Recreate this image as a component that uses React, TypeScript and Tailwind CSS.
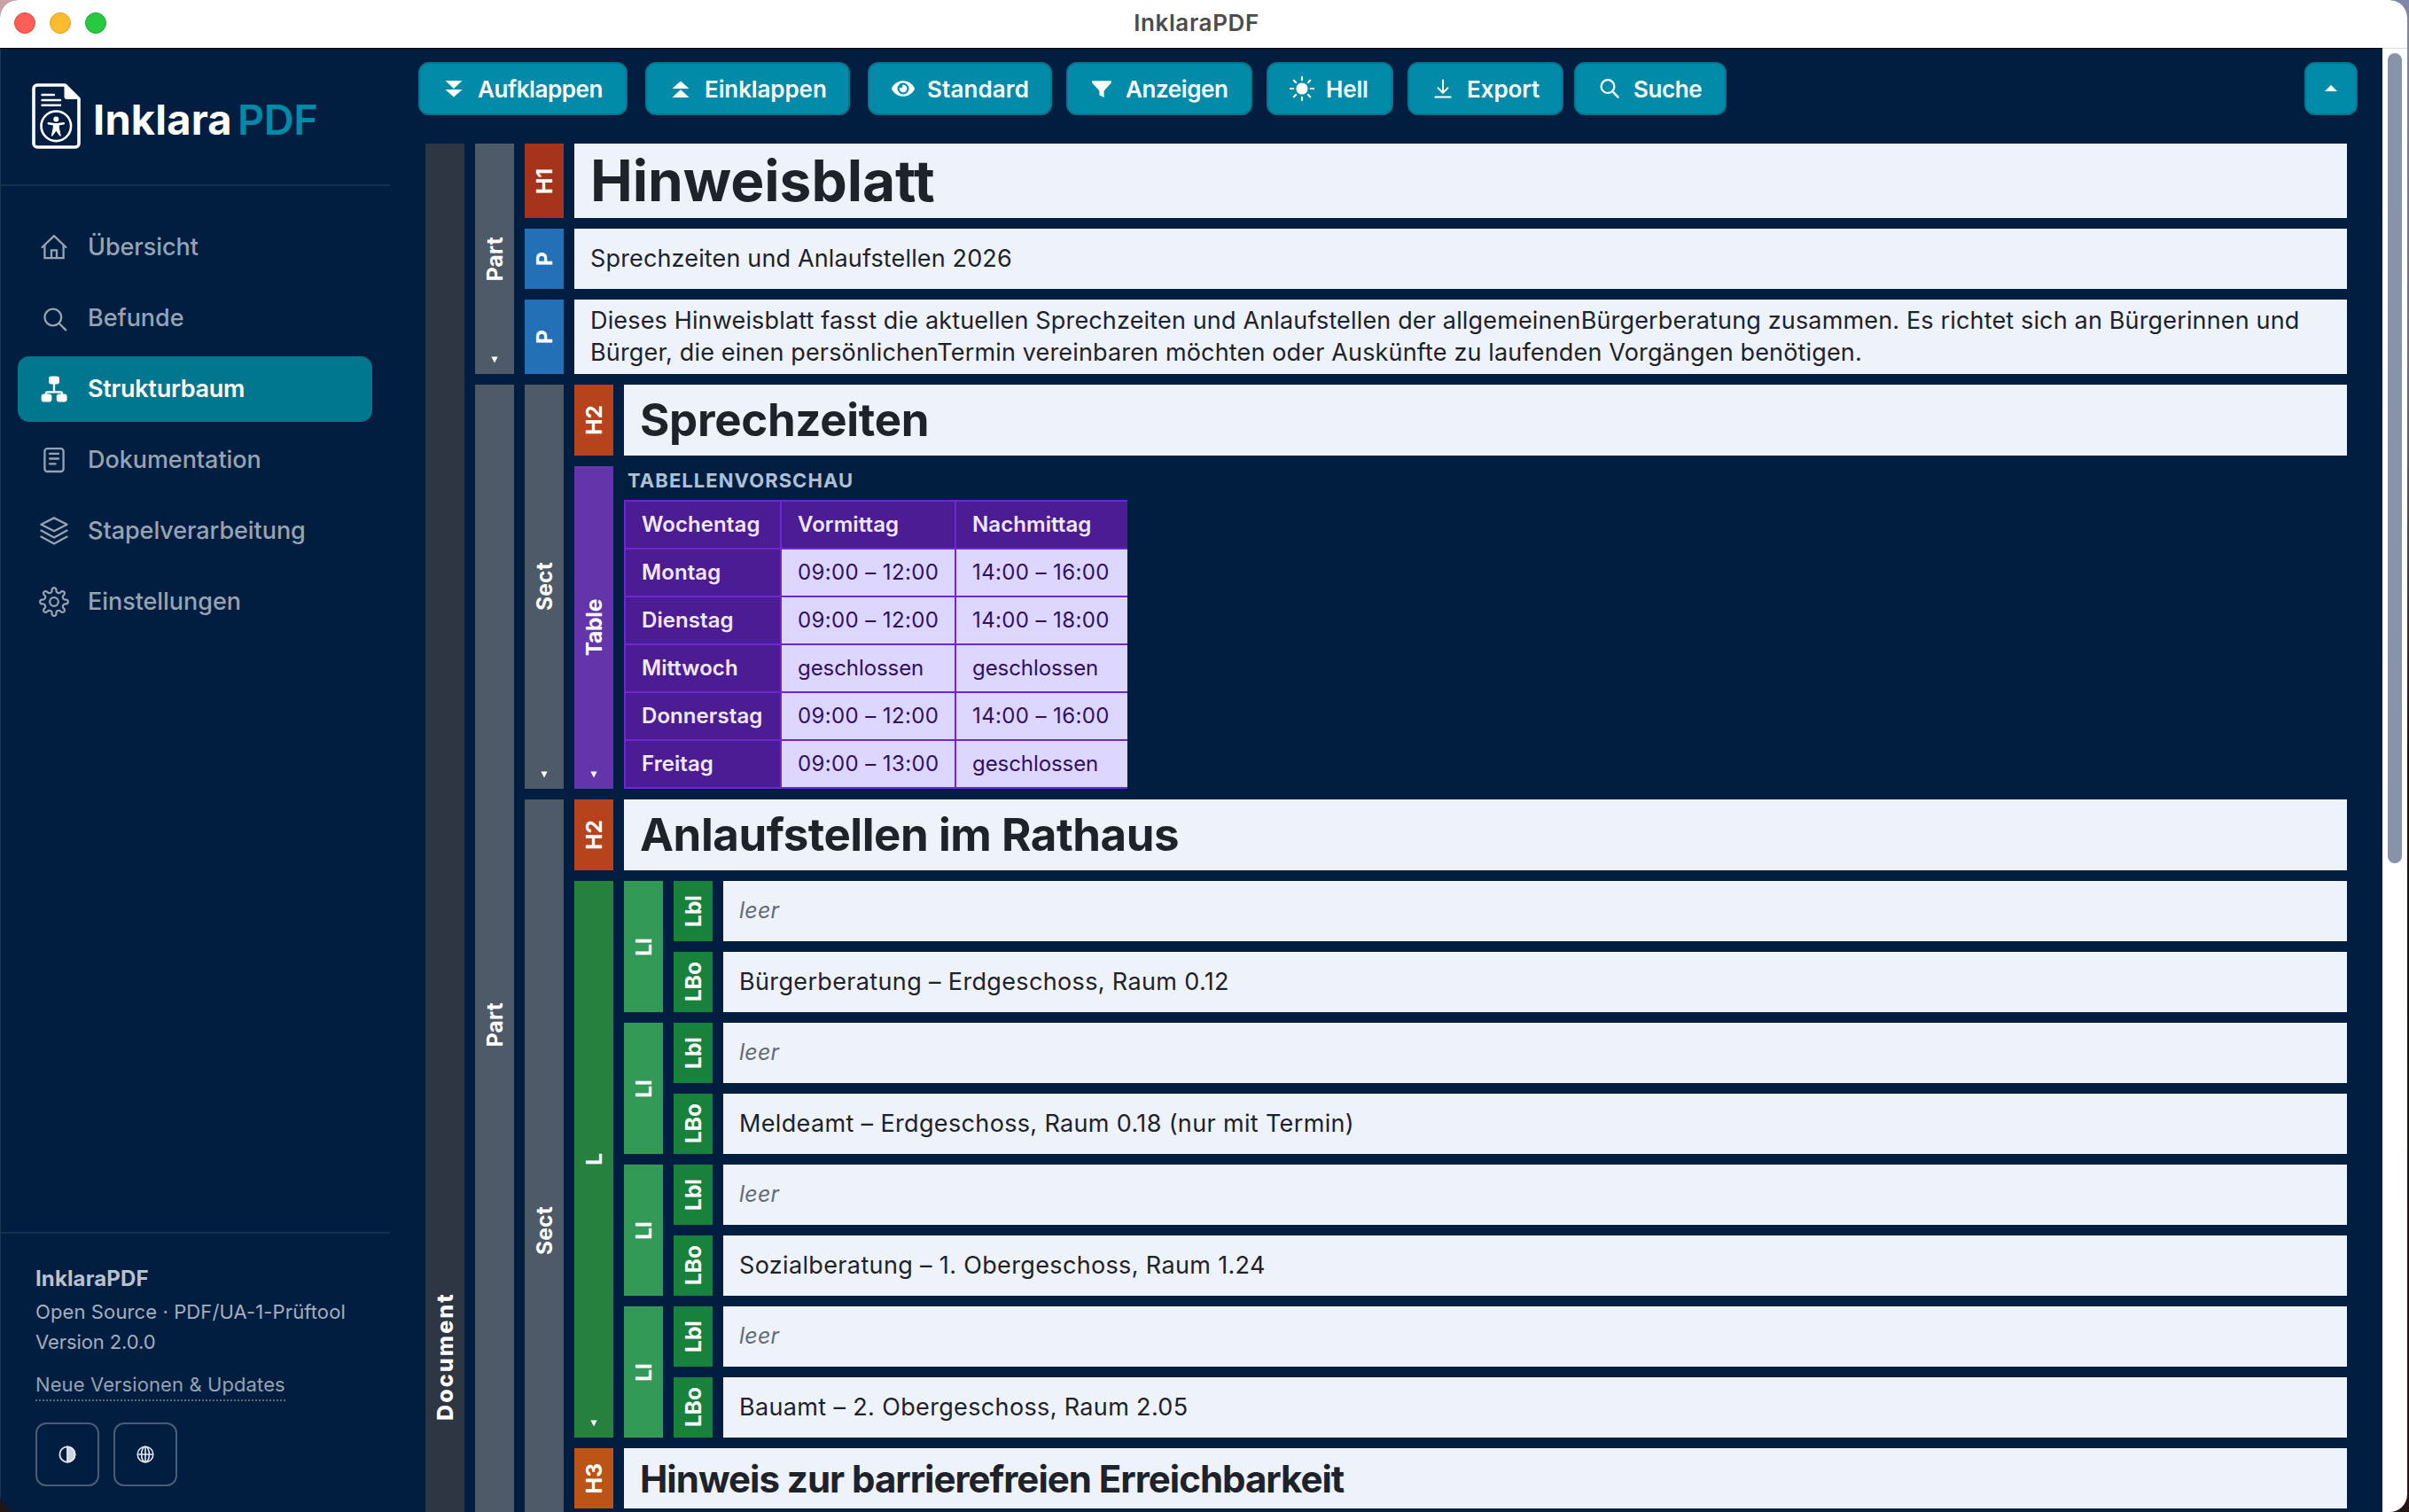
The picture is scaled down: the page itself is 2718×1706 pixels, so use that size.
import type { ReactNode } from "react";
import { FaEye } from "react-icons/fa";

const polar = (deg: number, r: number) => {
  const a = (deg * Math.PI) / 180;
  return `${(17 + r * Math.cos(a)).toFixed(2)} ${(17 + r * Math.sin(a)).toFixed(2)}`;
};

const GEAR_PATH =
  `M${polar(-10.5, 12.8)}` +
  Array.from({ length: 8 }, (_, k) => {
    const t = k * 45;
    return `A2.5 2.5 0 0 1 ${polar(t, 15.9)}A2.5 2.5 0 0 1 ${polar(t + 10.5, 12.8)}A3 3 0 0 0 ${polar(t + 34.5, 12.8)}`;
  }).join("") +
  "Z";

function NavSvg({ children }: { children: ReactNode }) {
  return (
    <svg
      viewBox="0 0 32 32"
      className="h-8 w-8 shrink-0 overflow-visible"
      fill="none"
      stroke="currentColor"
      strokeWidth={2.3}
      strokeLinecap="round"
      strokeLinejoin="round"
    >
      {children}
    </svg>
  );
}

const HomeIcon = (
  <NavSvg>
    <path d="M2.6 16 16 3.2 29.4 16" />
    <path d="M5.4 13.5V28.2H26.6V13.5" strokeLinejoin="miter" />
    <path d="M13 28V19.3H19V28" strokeLinejoin="miter" strokeLinecap="butt" />
  </NavSvg>
);
const SearchIcon = (
  <NavSvg>
    <circle cx="14.8" cy="15" r="9.4" />
    <path d="M21.6 21.8 29.2 29.4" />
  </NavSvg>
);
const TreeIcon = (
  <NavSvg>
    <g fill="currentColor" stroke="none">
      <rect x="10" y="1.4" width="12" height="9" rx="3" />
      <rect x="1.6" y="21.4" width="11.8" height="9" rx="3" />
      <rect x="18.8" y="21.4" width="11.8" height="9" rx="3" />
    </g>
    <path d="M16 10V19M7 22V20.5Q7 19.3 8.2 19.3H23.8Q25 19.3 25 20.5V22" />
  </NavSvg>
);
const DocIcon = (
  <NavSvg>
    <rect x="5.4" y="3.2" width="21.2" height="25.8" rx="3" />
    <path d="M11 8.9H21M11 14.5H21M11 20.3H17.6" />
  </NavSvg>
);
const StackIcon = (
  <NavSvg>
    <path d="M16 1.4 30.6 8.8 16 16.2 1.4 8.8Z" />
    <path d="M1.4 15.6 16 23.4 30.6 15.6" />
    <path d="M1.4 22.6 16 30.4 30.6 22.6" />
  </NavSvg>
);
const GearIcon = (
  <svg
    viewBox="0 0 34 34"
    className="-mx-px h-[34px] w-[34px] shrink-0"
    fill="none"
    stroke="currentColor"
    strokeWidth={2.2}
    strokeLinejoin="round"
  >
    <path d={GEAR_PATH} />
    <circle cx="17" cy="17" r="4.8" />
  </svg>
);

const NAV = [
  { label: "Übersicht", icon: HomeIcon, active: false },
  { label: "Befunde", icon: SearchIcon, active: false },
  { label: "Strukturbaum", icon: TreeIcon, active: true },
  { label: "Dokumentation", icon: DocIcon, active: false },
  { label: "Stapelverarbeitung", icon: StackIcon, active: false },
  { label: "Einstellungen", icon: GearIcon, active: false },
];

function Logo() {
  return (
    <div className="flex h-[74px] items-center">
      <svg viewBox="0 0 55 74" className="h-[74px] w-[55px] shrink-0" fill="none" stroke="#fff" strokeLinecap="round">
        <path d="M6 2H37.5L53 17.5V68A4 4 0 0 1 49 72H6A4 4 0 0 1 2 68V6A4 4 0 0 1 6 2Z" strokeWidth="3.6" strokeLinejoin="round" />
        <path d="M36.5 1 54 18H39.5Q36.5 18 36.5 15Z" fill="#fff" stroke="none" />
        <path d="M11.5 13H25M11.5 19H32M11.5 24.8H32" strokeWidth="2.4" />
        <circle cx="27.3" cy="48.3" r="16.8" strokeWidth="2.6" />
        <circle cx="27.3" cy="40.4" r="3" fill="#fff" stroke="none" />
        <path d="M18.8 45.3 27.3 46.6 35.8 45.3" strokeWidth="2.6" strokeLinejoin="round" />
        <path d="M24.6 46H30L30.2 50.5 32 59 27.3 52.5 22.6 59 24.4 50.5Z" fill="#fff" strokeWidth="1.4" strokeLinejoin="round" />
      </svg>
      <div className="mt-[7px] ml-[14px] flex text-[47px] leading-[60px] font-bold">
        <span className="w-[164px] tracking-[0.004em] text-white">Inklara</span>
        <span className="-ml-px font-semibold tracking-[-0.012em] text-[#018aa7]">PDF</span>
      </div>
    </div>
  );
}

function Sidebar() {
  return (
    <aside className="flex w-[440px] shrink-0 flex-col border-l border-[#1b3757]">
      <div className="h-[155px] border-b-2 border-[#15304f] pt-[39px] pl-[35px]">
        <Logo />
      </div>
      <nav className="flex flex-col gap-[6px] pt-8 pr-5 pl-[19px]">
        {NAV.map((n) => (
          <div
            key={n.label}
            className={
              n.active
                ? "flex h-[74px] items-center gap-[22px] rounded-[13px] bg-[#00778f] pl-[25px] text-[27px] font-semibold tracking-[-0.01em] text-white"
                : "flex h-[74px] items-center gap-[22px] rounded-[13px] pl-[25px] text-[27px] font-medium tracking-[-0.002em] text-[#96a3b3]"
            }
          >
            {n.icon}
            <span>{n.label}</span>
          </div>
        ))}
      </nav>
      <footer className="mt-auto flex h-[316px] flex-col items-start border-t-2 border-[#15304f] pt-8 pl-[39px] text-[22px] text-[#a3afbe]">
        <div className="w-full h-[38px] text-2xl leading-[38px] font-bold tracking-[0.005em] text-[#b8c2ce]">InklaraPDF</div>
        <div className="mt-px leading-[34px] tracking-[0.005em]">Open Source · PDF/UA-1-Prüftool</div>
        <div className="leading-[34px] tracking-[-0.004em]">Version 2.0.0</div>
        <div className="mt-[14px] h-[36px] border-b-2 border-dotted border-[#5b6d84] leading-[34px] tracking-[0.005em] text-[#94a1b1]">
          Neue Versionen &amp; Updates
        </div>
        <div className="mt-6 flex gap-4">
          <div className="flex h-[72px] w-[72px] items-center justify-center rounded-[12px] border-2 border-[#4b5d76]">
            <svg viewBox="0 0 20 20" className="h-5 w-5" fill="none" stroke="#e3e8ef" strokeWidth="1.8">
              <circle cx="10" cy="10" r="8.6" />
              <path d="M10 1.4A8.6 8.6 0 0 1 10 18.6Z" fill="#cfd5e0" />
            </svg>
          </div>
          <div className="flex h-[72px] w-[72px] items-center justify-center rounded-[12px] border-2 border-[#4b5d76]">
            <svg viewBox="0 0 20 20" className="h-5 w-5" fill="none" stroke="#e3e8ef" strokeWidth="1.6">
              <circle cx="10" cy="10" r="8.8" />
              <ellipse cx="10" cy="10" rx="4.4" ry="8.8" />
              <path d="M1 10H19M10 1V19" />
            </svg>
          </div>
        </div>
      </footer>
    </aside>
  );
}

function ToolSvg({ children }: { children: ReactNode }) {
  return (
    <svg viewBox="-16 -16 32 32" className="h-8 w-8 shrink-0" fill="none" stroke="currentColor" strokeWidth="2" strokeLinecap="round">
      {children}
    </svg>
  );
}

function ToolButton({ className, icon, label }: { className: string; icon: ReactNode; label: string }) {
  return (
    <div
      className={`flex h-[60px] items-center gap-[11px] rounded-[12px] border-2 border-[#05768e] bg-[#018ba8] pl-[22px] text-[26px] font-semibold whitespace-nowrap text-white ${className}`}
    >
      {icon}
      <span>{label}</span>
    </div>
  );
}

function Toolbar() {
  return (
    <div className="flex h-[60px] w-[2188px] shrink-0 -ml-2">
      <ToolButton
        className="w-[236px] tracking-[-0.016em]"
        label="Aufklappen"
        icon={
          <ToolSvg>
            <path d="M-9.5-9H9.5L0 0ZM-9.5 1H9.5L0 9.5Z" fill="currentColor" stroke="none" />
          </ToolSvg>
        }
      />
      <ToolButton
        className="ml-5 w-[231px] tracking-[-0.004em]"
        label="Einklappen"
        icon={
          <ToolSvg>
            <path d="M-9.5 0H9.5L0-8.5ZM-9.5 10H9.5L0 1Z" fill="currentColor" stroke="none" />
          </ToolSvg>
        }
      />
      <ToolButton
        className="ml-5 w-[208px] tracking-[0.004em]"
        label="Standard"
        icon={
          <span className="flex w-8 justify-center">
            <FaEye className="h-[26px] w-[26px]" />
          </span>
        }
      />
      <ToolButton
        className="ml-4 w-[210px] tracking-[-0.016em]"
        label="Anzeigen"
        icon={
          <ToolSvg>
            <path d="M-10.8-8.8H10.8V-6.6L2.6 2.4V10L-2.6 7.2V2.4L-10.8-6.6Z" fill="currentColor" stroke="none" />
          </ToolSvg>
        }
      />
      <ToolButton
        className="ml-4 w-[143px] tracking-[-0.007em]"
        label="Hell"
        icon={
          <ToolSvg>
            <circle r="6.6" fill="currentColor" stroke="none" />
            {[0, 45, 90, 135, 180, 225, 270, 315].map((a) => (
              <path key={a} d="M0-9.8V-13" transform={`rotate(${a})`} strokeWidth="2.2" />
            ))}
          </ToolSvg>
        }
      />
      <ToolButton
        className="ml-4 w-[176px] tracking-[-0.003em]"
        label="Export"
        icon={
          <ToolSvg>
            <path d="M0-9.5V4.6M-5.4-.6 0 4.8 5.4-.6M-8.6 9.6H8.6" strokeLinejoin="round" />
          </ToolSvg>
        }
      />
      <ToolButton
        className="ml-3 w-[172px] tracking-[-0.016em]"
        label="Suche"
        icon={
          <ToolSvg>
            <circle cx="-2" cy="-2.4" r="7.4" strokeWidth="2.2" />
            <path d="M3.6 3.4 9.6 9.6" strokeWidth="2.4" />
          </ToolSvg>
        }
      />
      <div className="ml-auto flex h-[60px] w-[60px] items-center justify-center rounded-[12px] border-2 border-[#05768e] bg-[#018ba8]">
        <svg viewBox="0 0 14 7" className="mt-[-2px] h-[7px] w-[14px]">
          <path d="M0 7H14L7 0Z" fill="#fff" />
        </svg>
      </div>
    </div>
  );
}

type Kind = "Document" | "Part" | "Sect" | "H1" | "H2" | "H3" | "P" | "Table" | "L" | "LI" | "Lbl" | "LBo";

const TAG_COLOR: Record<Kind, string> = {
  Document: "bg-[#2f3643] font-extrabold text-[25px] tracking-[0.085em]",
  Part: "bg-[#4f5a69] font-bold tracking-[0.01em]",
  Sect: "bg-[#4f5a69] font-bold tracking-[0.01em]",
  H1: "bg-[#a6341c] font-bold",
  H2: "bg-[#b6431b] font-bold",
  H3: "bg-[#bb5416] font-bold",
  P: "bg-[#2370b7] font-bold",
  Table: "bg-[#6434ab] font-bold tracking-[-0.01em]",
  L: "bg-[#26803e] font-bold",
  LI: "bg-[#329956] font-bold",
  Lbl: "bg-[#18823d] font-bold",
  LBo: "bg-[#18823d] font-bold",
};

function Tag({ kind, caret }: { kind: Kind; caret?: boolean }) {
  return (
    <div className={`relative flex w-11 shrink-0 items-center justify-center text-[24.5px] text-white ${TAG_COLOR[kind]}`}>
      <span className="rotate-180 leading-[30px] whitespace-nowrap [writing-mode:vertical-rl]">{kind}</span>
      {caret && (
        <svg viewBox="0 0 8 8" className="absolute bottom-3 left-[18px] h-2 w-2">
          <path d="M.4.5H7.6L4 7.6Z" fill="#fff" />
        </svg>
      )}
    </div>
  );
}

function Node({ kind, caret, className = "", children }: { kind: Kind; caret?: boolean; className?: string; children: ReactNode }) {
  return (
    <div className={`flex shrink-0 gap-3 ${className}`}>
      <Tag kind={kind} caret={caret} />
      <div className="flex min-w-0 flex-1 flex-col gap-3">{children}</div>
    </div>
  );
}

function Leaf({ kind, className, children }: { kind: Kind; className: string; children: ReactNode }) {
  return (
    <div className="flex shrink-0 gap-3">
      <Tag kind={kind} />
      <div className={`flex flex-1 items-center bg-[#eef2fb] pl-[18px] whitespace-pre text-[#1d222b] ${className}`}>
        <span>{children}</span>
      </div>
    </div>
  );
}

const HOURS = [
  ["Wochentag", "Vormittag", "Nachmittag"],
  ["Montag", "09:00 – 12:00", "14:00 – 16:00"],
  ["Dienstag", "09:00 – 12:00", "14:00 – 18:00"],
  ["Mittwoch", "geschlossen", "geschlossen"],
  ["Donnerstag", "09:00 – 12:00", "14:00 – 16:00"],
  ["Freitag", "09:00 – 13:00", "geschlossen"],
];

function HoursTable() {
  return (
    <div className="grid w-[568px] grid-cols-[174px_195px_193px] gap-0.5 bg-[#6d28d0] p-0.5 text-2xl">
      {HOURS.map((row, r) =>
        row.map((cell, c) => (
          <div
            key={`${r}-${c}`}
            className={
              r === 0 || c === 0
                ? "flex h-[52px] items-center bg-[#4b1c93] pl-[18px] font-semibold tracking-[0.003em] text-[#f1e8ff]"
                : cell === "geschlossen"
                  ? "flex h-[52px] items-center bg-[#ddd6fe] pl-[18px] tracking-[-0.003em] text-[#2e1065]"
                  : "flex h-[52px] items-center bg-[#ddd6fe] pl-[18px] tracking-[0.016em] text-[#2e1065]"
            }
          >
            {cell}
          </div>
        )),
      )}
    </div>
  );
}

const OFFICES = [
  "Bürgerberatung – Erdgeschoss, Raum 0.12",
  "Meldeamt – Erdgeschoss, Raum 0.18 (nur mit Termin)",
  "Sozialberatung – 1. Obergeschoss, Raum 1.24",
  "Bauamt – 2. Obergeschoss, Raum 2.05",
];

function StructureTree() {
  return (
    <div className="mt-8 w-[2168px]">
      <Node kind="Document" className="h-[2736px]">
        <Node kind="Part" caret>
          <Leaf kind="H1" className="h-[84px] pb-px text-[64px] font-bold tracking-[-0.001em]">
            Hinweisblatt
          </Leaf>
          <Leaf kind="P" className="h-[68px] text-[27px] tracking-[0.0055em]">
            Sprechzeiten und Anlaufstellen 2026
          </Leaf>
          <Leaf kind="P" className="h-[84px] text-[27px] leading-9 tracking-[0.0058em]">
            Dieses Hinweisblatt fasst die aktuellen Sprechzeiten und Anlaufstellen der allgemeinenBürgerberatung zusammen. Es richtet sich an Bürgerinnen und
            <br />
            Bürger, die einen persönlichenTermin vereinbaren möchten oder Auskünfte zu laufenden Vorgängen benötigen.
          </Leaf>
        </Node>
        <Node kind="Part" className="h-[1445px]">
          <Node kind="Sect" caret>
            <Leaf kind="H2" className="h-20 text-[51px] font-bold tracking-[-0.006em]">
              Sprechzeiten
            </Leaf>
            <Node kind="Table" caret>
              <div>
                <div className="h-[38px] pl-1 text-[22px] leading-8 font-bold tracking-[0.048em] text-[#adc0d6]">TABELLENVORSCHAU</div>
                <HoursTable />
              </div>
            </Node>
          </Node>
          <Node kind="Sect" className="h-[974px]">
            <Leaf kind="H2" className="h-20 text-[51px] font-bold tracking-[-0.009em]">
              Anlaufstellen im Rathaus
            </Leaf>
            <Node kind="L" caret>
              {OFFICES.map((office) => (
                <Node key={office} kind="LI">
                  <Leaf kind="Lbl" className="h-[68px] text-[25px] tracking-[0.01em] text-[#656b76]! italic">
                    leer
                  </Leaf>
                  <Leaf kind="LBo" className="h-[68px] text-[27px] tracking-[0.013em]">
                    {office}
                  </Leaf>
                </Node>
              ))}
            </Node>
            <Leaf kind="H3" className="h-[68px] text-[42px] font-bold tracking-[-0.024em]">
              Hinweis zur barrierefreien Erreichbarkeit
            </Leaf>
          </Node>
        </Node>
      </Node>
    </div>
  );
}

export default function App() {
  return (
    <div className="h-[1706px] w-[2718px] overflow-hidden bg-[radial-gradient(circle_at_0_0,#c9a3a3_0_60px,transparent_60px),linear-gradient(to_bottom,#7f87a9,#6c6a85_25%,#1a1012_50%,#241512)] font-['Inter',sans-serif]">
      <div className="flex h-[1706px] w-[2716px] flex-col overflow-hidden rounded-[20px] bg-[#011e41]">
        <header className="relative flex h-[54px] shrink-0 items-center bg-white pl-4">
          <div className="flex gap-4 pb-0.5">
            <div className="h-6 w-6 rounded-full border border-[#e2463f] bg-[#ff5f57]" />
            <div className="h-6 w-6 rounded-full border border-[#dfa023] bg-[#febc2e]" />
            <div className="h-6 w-6 rounded-full border border-[#1dab2e] bg-[#28c840]" />
          </div>
          <div className="mr-[162px] flex-1 pb-1 text-center text-[26px] font-semibold tracking-[0.024em] text-[#4c4c4c]">
            <span className="ml-[26px]">InklaraPDF</span>
          </div>
        </header>
        <div className="flex min-h-0 flex-1">
          <div className="flex w-[2688px] shrink-0 border-t border-black">
            <Sidebar />
            <main className="flex min-h-0 flex-1 flex-col overflow-hidden pt-[15px] pl-10">
              <Toolbar />
              <StructureTree />
            </main>
          </div>
          <div className="flex-1 border-t border-[#d9d9d9] bg-white pt-[5px] pl-1.5">
            <div className="h-[914px] w-4 rounded-full bg-[#8793a8]" />
          </div>
        </div>
      </div>
    </div>
  );
}
